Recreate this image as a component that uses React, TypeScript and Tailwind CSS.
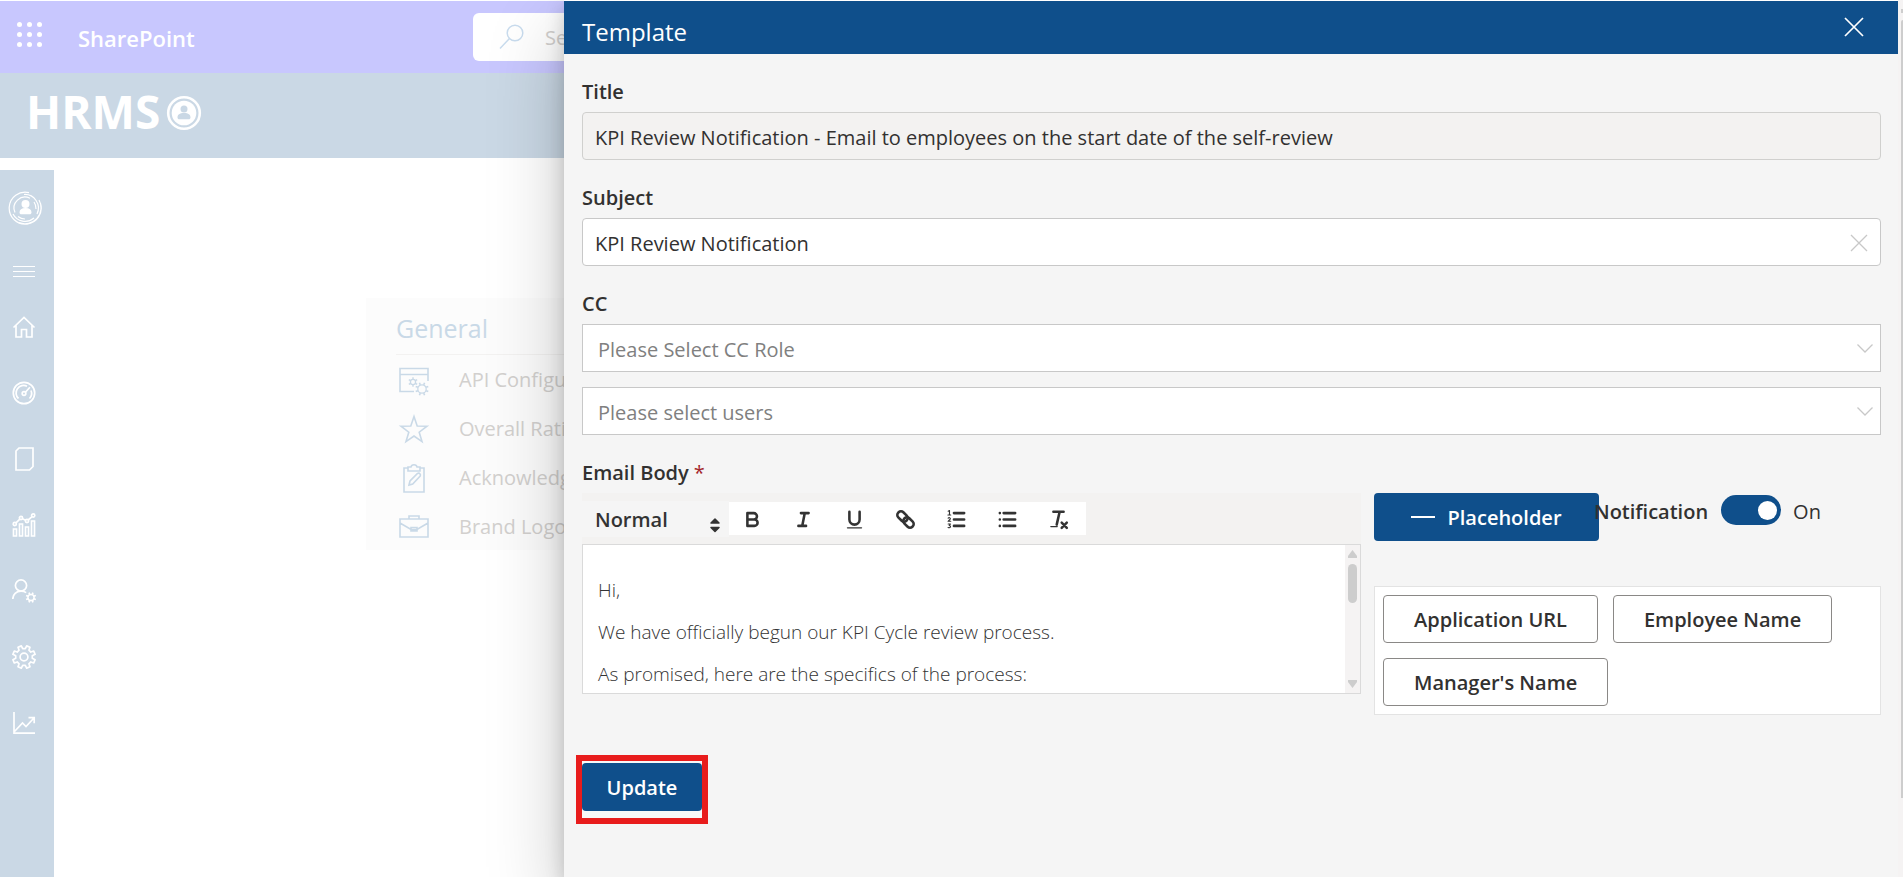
import React, { useState } from "react";

type IconProps = { className?: string };

const stroke = {
  fill: "none",
  stroke: "currentColor",
  strokeWidth: 1.7,
  viewBox: "0 0 24 24",
} as const;

function gearPath(cx: number, cy: number, outer: number, inner: number, teeth: number) {
  const pts: string[] = [];
  const step = (Math.PI * 2) / teeth;
  for (let i = 0; i < teeth; i++) {
    const a = (i + 0.5) * step - Math.PI / 2;
    const spread: [number, number][] = [
      [-0.3, inner],
      [-0.2, outer],
      [0.2, outer],
      [0.3, inner],
    ];
    spread.forEach(([o, r]) => {
      const t = a + o * step;
      pts.push(`${(cx + r * Math.cos(t)).toFixed(2)} ${(cy + r * Math.sin(t)).toFixed(2)}`);
    });
  }
  return `M${pts.join("L")}Z`;
}

function tickPath(cx: number, cy: number, from: number, to: number, count: number) {
  return Array.from({ length: count }, (_, i) => {
    const a = ((i + 0.5) * Math.PI * 2) / count;
    const c = Math.cos(a);
    const s = Math.sin(a);
    return `M${(cx + from * c).toFixed(2)} ${(cy + from * s).toFixed(2)}L${(cx + to * c).toFixed(2)} ${(cy + to * s).toFixed(2)}`;
  }).join("");
}

const BrandMark = ({ className }: IconProps) => (
  <svg className={className} viewBox="0 0 34 34" fill="none" stroke="currentColor" aria-hidden="true">
    <path d="M21 1.6A16 16 0 1 0 32.5 12.500M31 9A16 16 0 0 1 11 31.600" strokeWidth="1.2" />
    <path d="M16 3.500A13.600 13.600 0 0 1 29 23M26 27A13.600 13.600 0 0 1 5 23" strokeWidth="1.2" />
    <path d="M22 7.200A11 11 0 0 0 7 21.500M10 25.500A11 11 0 0 0 17 28M26 11A11 11 0 0 1 28 18" strokeWidth="1.2" />
    <circle cx="17.500" cy="13" r="4" fill="currentColor" stroke="none" />
    <path d="M11.500 21.500c0-3 2-4.500 6-4.500s6 1.500 6 4.500c0 1-.8 1.800-1.800 1.800h-8.400c-1 0-1.800-.8-1.800-1.800Z" fill="currentColor" stroke="none" />
  </svg>
);

const HomeIcon = ({ className }: IconProps) => (
  <svg className={className} {...stroke} aria-hidden="true">
    <path d="M1.500 12.500 12 2.500l10.500 10M4 10.500V22h5.500v-7.500h5V22H20V10.500" />
  </svg>
);
const GaugeIcon = ({ className }: IconProps) => (
  <svg className={className} {...stroke} aria-hidden="true">
    <circle cx="12" cy="12" r="10.700" />
    <circle cx="12" cy="12.500" r="1.800" />
    <path d="m13.400 11.200 4.500-5M6.500 17.500A7.500 7.500 0 0 1 15 5.300M19 9.500a7.500 7.500 0 0 1-1.500 8" />
  </svg>
);
const NoteIcon = ({ className }: IconProps) => (
  <svg className={className} {...stroke} aria-hidden="true">
    <path d="M7 1h14v18.500L17.500 23H4V4Z" />
  </svg>
);
const ChartIcon = ({ className }: IconProps) => (
  <svg className={className} {...stroke} aria-hidden="true">
    <path d="M1.500 16h3v7h-3zM7.500 11h3v12h-3zM13.500 14h3v9h-3zM19.500 8h3v15h-3z" />
    <circle cx="2.800" cy="11" r="1.600" />
    <circle cx="9" cy="5" r="1.600" />
    <circle cx="15" cy="8" r="1.600" />
    <circle cx="21.200" cy="2.500" r="1.600" />
    <path d="m4 9.900 3.800-3.800M10.500 5.800l3 1.400M16.200 7 20 3.600" />
  </svg>
);
const UserGearIcon = ({ className }: IconProps) => (
  <svg className={className} {...stroke} aria-hidden="true">
    <circle cx="9" cy="6.500" r="5.600" />
    <path d="M.8 20c0-4.600 3.500-7.900 8.200-7.900 2 0 3.800.5 5.200 1.500" />
    <circle cx="19" cy="18.500" r="3.100" strokeWidth="1.500" />
    <path d={tickPath(19, 18.5, 3.2, 5.3, 8)} strokeWidth="1.700" />
  </svg>
);
const GearIcon = ({ className }: IconProps) => (
  <svg className={className} {...stroke} strokeLinejoin="round" aria-hidden="true">
    <path d={gearPath(12, 12, 11.4, 8.4, 8)} />
    <circle cx="12" cy="12" r="3.900" />
  </svg>
);
const TrendIcon = ({ className }: IconProps) => (
  <svg className={className} {...stroke} aria-hidden="true">
    <path d="M2 1v21.200H23M2.500 20.500l8-8.500 3.500 3.500L21.500 7.500M16.500 6.700h5.700v5.500" />
  </svg>
);

const ApiIcon = ({ className }: IconProps) => (
  <svg className={className} viewBox="0 0 32 32" fill="none" stroke="currentColor" strokeWidth="1.600" aria-hidden="true">
    <path d="M30 17V4.500H2v23h14M2 10.500h28" />
    <circle cx="15" cy="18" r="2.600" strokeWidth="1.300" />
    <path d={tickPath(15, 18, 2.8, 4.8, 6)} strokeWidth="1.400" />
    <circle cx="24" cy="25" r="4.200" strokeWidth="1.300" />
    <path d={tickPath(24, 25, 4.4, 6.8, 8)} strokeWidth="1.600" />
  </svg>
);
const StarIcon = ({ className }: IconProps) => (
  <svg className={className} viewBox="0 0 32 32" fill="none" stroke="currentColor" strokeWidth="1.600" aria-hidden="true">
    <path d="m16 3.500 3.200 9.500 9.800.2-7.800 6 2.800 9.400-8-5.600-8 5.600 2.800-9.400-7.800-6 9.800-.2Z" />
  </svg>
);
const ClipboardIcon = ({ className }: IconProps) => (
  <svg className={className} viewBox="0 0 32 32" fill="none" stroke="currentColor" strokeWidth="1.600" aria-hidden="true">
    <path d="M10 6H6v24h20V6h-4M10 5h3c.4-3 5.600-3 6 0h3v4H10ZM11 23l1-4 7.500-7.500c2-1 3.500.8 2.700 2.600L14.700 22Z" />
  </svg>
);
const CaseIcon = ({ className }: IconProps) => (
  <svg className={className} viewBox="0 0 32 32" fill="none" stroke="currentColor" strokeWidth="1.600" aria-hidden="true">
    <path d="M2 8h28v18H2ZM11 8V5h10v3M2 12l11 6.500h6L30 12M13 16.500h6v3.500h-6Z" />
  </svg>
);

const sideItems = [
  { label: "Home", Icon: HomeIcon },
  { label: "Dashboard", Icon: GaugeIcon },
  { label: "Notes", Icon: NoteIcon },
  { label: "Reports", Icon: ChartIcon },
  { label: "User settings", Icon: UserGearIcon },
  { label: "Settings", Icon: GearIcon },
  { label: "Trends", Icon: TrendIcon },
];

const generalItems = [
  { label: "API Configuration", Icon: ApiIcon },
  { label: "Overall Rating", Icon: StarIcon },
  { label: "Acknowledge", Icon: ClipboardIcon },
  { label: "Brand Logo", Icon: CaseIcon },
];

function BackgroundPage() {
  return (
    <div className="flex h-full flex-col pt-px">
      <header className="flex h-[72px] shrink-0 items-center bg-[#c8c7fe] text-white">
        <button aria-label="App launcher" className="mb-1.5 ml-[17px] grid grid-cols-3 gap-[5px]">
          {Array.from({ length: 9 }, (_, i) => (
            <span key={i} className="size-[5px] rounded-full bg-white" />
          ))}
        </button>
        <span className="ml-9 w-[395px] pt-0.5 text-[22px] font-semibold">SharePoint</span>
        <div className="flex h-12 flex-1 items-center rounded-md bg-white">
          <svg className="ml-6 size-7 text-[#c9dcee]" viewBox="0 0 28 28" fill="none" stroke="currentColor" strokeWidth="1.500" aria-hidden="true">
            <circle cx="18" cy="10" r="7.800" />
            <path d="M12.500 15.500 3 25.500" />
          </svg>
          <input
            aria-label="Search"
            placeholder="Search"
            className="ml-5 w-40 bg-transparent pt-0.5 text-xl outline-none placeholder:text-[#d2d0ce]"
          />
        </div>
      </header>
      <div className="flex h-[85px] shrink-0 items-center bg-[#cad8e5] pb-1.5 pl-[26px] text-white">
        <span className="pb-1 text-[46px] leading-none font-bold">HRMS</span>
        <svg className="ml-1.5 size-9" viewBox="0 0 36 36" fill="none" stroke="currentColor" aria-hidden="true">
          <circle cx="18" cy="18" r="15.800" strokeWidth="2.600" />
          <circle cx="18" cy="18" r="12.300" fill="currentColor" stroke="none" />
          <g fill="#cad8e5" stroke="none">
            <circle cx="18" cy="14" r="3.500" />
            <path d="M11.500 22.500c0-3 2-4.500 6.500-4.500s6.500 1.500 6.500 4.500c0 1-.8 1.800-1.800 1.800h-9.400c-1 0-1.800-.8-1.800-1.800Z" />
          </g>
        </svg>
      </div>
      <div className="flex flex-1 pt-3">
        <nav aria-label="Main" className="flex w-[54px] shrink-0 flex-col bg-[#cad8e5] text-white">
          <a href="#profile" aria-label="Profile" className="flex h-[76px] items-center pl-2">
            <BrandMark className="size-[34px]" />
          </a>
          <button aria-label="Menu" className="flex h-12 flex-col justify-center gap-1 pt-0.5 pl-[13px]">
            <span className="h-px w-[22px] bg-white" />
            <span className="h-px w-[22px] bg-white" />
            <span className="h-px w-[22px] bg-white" />
          </button>
          {sideItems.map(({ label, Icon }) => (
            <a key={label} href="#nav" aria-label={label} className="flex h-[66px] items-center pl-3">
              <Icon className="size-6" />
            </a>
          ))}
        </nav>
        <main className="flex-1 pt-32 pl-[312px]">
          <section className="h-[252px] w-[420px] bg-[#fcfcfc] px-[30px] pt-1.5">
            <h2 className="h-[51px] border-b border-[#f3f2f1] text-[25px] leading-[48px] text-[#c9d9e7]">General</h2>
            <ul>
              {generalItems.map(({ label, Icon }) => (
                <li key={label} className="flex h-[49px] items-center text-xl text-[#d2d0ce]">
                  <Icon className="mr-[29px] ml-0.5 size-8 shrink-0 text-[#c9d9e7]" />
                  {label}
                </li>
              ))}
            </ul>
          </section>
        </main>
      </div>
    </div>
  );
}

const labelClass = "flex gap-[5px] text-xl leading-7 font-semibold text-[#323130]";

function Select({ label, text }: { label: string; text: string }) {
  return (
    <div className="relative">
      <select
        aria-label={label}
        className="h-12 w-full appearance-none border border-[#c8c8c8] bg-white pt-1 pl-[15px] text-xl text-[#808080] outline-none"
      >
        <option>{text}</option>
      </select>
      <svg className="pointer-events-none absolute top-4 right-2 size-4 text-[#c8c8c8]" viewBox="0 0 16 16" fill="none" stroke="currentColor" strokeWidth="1.300" aria-hidden="true">
        <path d="m.5 4.500 7.500 7.500 7.500-7.500" />
      </svg>
    </div>
  );
}

const tools = [
  { label: "Bold", d: "M5 4h5a2.500 2.500 0 0 1 0 5H5ZM5 9h5.500a2.500 2.500 0 0 1 0 5H5Z" },
  { label: "Italic", d: "M7 4h6M5 14h6M8 14l2-10" },
  { label: "Underline", d: "M5 3v6a4 4 0 0 0 8 0V3" },
  { label: "Link", d: "" },
  { label: "Numbered list", d: "M7 4h8M7 9h8M7 14h8" },
  { label: "Bulleted list", d: "M6 4h9M6 9h9M6 14h9M3 4h.01M3 9h.01M3 14h.01" },
  { label: "Clear formatting", d: "M5 3h8M7.600 13 9.900 3" },
];

function Toolbar() {
  return (
    <div className="flex h-[51px] items-center bg-[#f3f2f1]">
      <div className="relative h-9 w-[147px] bg-[#f5f5f5]">
        <select
          aria-label="Text style"
          className="h-9 w-full appearance-none bg-transparent pt-0.5 pl-[13px] text-xl font-semibold text-[#333] outline-none"
        >
          <option>Normal</option>
        </select>
        <svg className="pointer-events-none absolute top-4 right-2 h-4 w-3" viewBox="0 0 12 16" fill="#333" stroke="#333" strokeWidth="1.500" strokeLinejoin="round" aria-hidden="true">
          <path d="M2 6h8L6 2ZM2 10.500h8L6 14.500Z" />
        </svg>
      </div>
      <div className="flex h-[33px] bg-white">
        {tools.map(({ label, d }) => (
          <button key={label} aria-label={label} className="flex w-[51px] items-center pt-0.5 pl-3">
            <svg className="size-[23px]" viewBox="0 0 18 18" fill="none" stroke="#333" strokeWidth="2" strokeLinecap="round" strokeLinejoin="round" aria-hidden="true">
              {d && <path d={d} />}
              {label === "Link" && (
                <g transform="rotate(45 9 9)">
                  <rect x="1.200" y="6.200" width="9" height="5.600" rx="2.600" />
                  <rect x="7.800" y="6.200" width="9" height="5.600" rx="2.600" />
                </g>
              )}
              {label === "Underline" && <path d="M3.500 15.500h11" strokeWidth="1" />}
              {label === "Numbered list" && (
                <path
                  d="M2.500 2.500l1-.5v3.500M2.300 5.500h2.200M2.500 8c.8-1 2.200 0 1.500.8L2.400 10.400h2.100M2.500 12.500h1.800l-1 1.200c1.500 0 1.300 2.200-.9 1.600"
                  strokeWidth=".9"
                />
              )}
              {label === "Clear formatting" && (
                <>
                  <path d="M3 14.500h5" strokeWidth="1" />
                  <path d="m11.500 11.500 4 4M15.500 11.500l-4 4" strokeWidth="2" />
                </>
              )}
            </svg>
          </button>
        ))}
      </div>
    </div>
  );
}

const chipClass =
  "h-12 rounded-sm border border-[#8a8886] bg-white px-[30px] pt-0.5 text-xl font-semibold text-[#323130]";

export default function App() {
  const [subject, setSubject] = useState("KPI Review Notification");
  const [notify, setNotify] = useState(true);

  return (
    <div className="relative h-screen overflow-hidden bg-white font-['Open_Sans',sans-serif]">
      <BackgroundPage />

      <div className="absolute inset-y-0 right-0 left-[564px] flex bg-[#f5f5f5] shadow-[0_32px_72px_rgba(0,0,0,0.22),0_6px_18px_rgba(0,0,0,0.18)]">
        <section aria-label="Template" className="flex-1">
          <header className="flex h-[54px] items-center justify-between border-t border-white bg-[#0f4f8b] pr-[34px] pb-0.5 pl-[18px] text-white">
            <h1 className="pt-2.5 text-2xl">Template</h1>
            <button aria-label="Close">
              <svg className="size-5" viewBox="0 0 20 20" stroke="currentColor" strokeWidth="1.700" aria-hidden="true">
                <path d="m1 1 18 18M19 1 1 19" />
              </svg>
            </button>
          </header>

          <form className="pt-6 pr-[17px] pl-[18px]" onSubmit={(e) => e.preventDefault()}>
            <label htmlFor="title" className={labelClass}>Title</label>
            <input
              id="title"
              readOnly
              value="KPI Review Notification - Email to employees on the start date of the self-review"
              className="mt-1.5 h-12 w-full rounded-sm border border-[#d0d0ce] bg-[#f3f2f1] px-3 pt-0.5 text-xl text-[#323130] outline-none"
            />

            <label htmlFor="subject" className={`${labelClass} mt-6`}>Subject</label>
            <div className="mt-1.5 flex h-12 items-center rounded-sm border border-[#c8c8c8] bg-white pr-3">
              <input
                id="subject"
                value={subject}
                onChange={(e) => setSubject(e.target.value)}
                className="h-full flex-1 bg-transparent px-3 pt-0.5 text-xl text-[#323130] outline-none"
              />
              <button type="button" aria-label="Clear subject" className="pt-0.5" onClick={() => setSubject("")}>
                <svg className="size-[18px] text-[#c8c8c8]" viewBox="0 0 18 18" stroke="currentColor" strokeWidth="1.300" aria-hidden="true">
                  <path d="m1 1 16 16M17 1 1 17" />
                </svg>
              </button>
            </div>

            <span className={`${labelClass} mt-6`}>CC</span>
            <div className="mt-1.5 flex flex-col gap-[15px]">
              <Select label="CC role" text="Please Select CC Role" />
              <Select label="CC users" text="Please select users" />
            </div>

            <div id="body-label" className={`${labelClass} mt-6`}>
              <span>Email Body</span>
              <span className="font-normal text-[#a4262c]">*</span>
            </div>

            <div className="mt-1.5 flex gap-[13px]">
              <div className="min-w-0 flex-[779]">
                <Toolbar />
                <div className="flex h-[150px] border border-[#dadada] bg-white">
                  <div
                    role="textbox"
                    aria-labelledby="body-label"
                    aria-multiline="true"
                    contentEditable
                    suppressContentEditableWarning
                    className="flex-1 overflow-hidden pt-6 pl-[15px] text-[19px] leading-[42px] font-light text-[#333] outline-none"
                  >
                    <p>Hi,</p>
                    <p>We have officially begun our KPI Cycle review process.</p>
                    <p>As promised, here are the specifics of the process:</p>
                  </div>
                  <div className="flex w-[15px] flex-col items-center justify-between bg-[#f5f3f3] py-[5px]">
                    <div className="flex flex-col items-center gap-[6px]">
                      <svg className="h-2 w-[9px]" viewBox="0 0 9 8" fill="#cdcdcd" aria-hidden="true"><path d="M4.500 0 9 6v2H0V6Z" /></svg>
                      <span className="h-[39px] w-[9px] rounded-full bg-[#cdcdcd]" />
                    </div>
                    <svg className="h-2 w-[9px]" viewBox="0 0 9 8" fill="#cdcdcd" aria-hidden="true"><path d="M4.500 8 9 2V0H0v2Z" /></svg>
                  </div>
                </div>
              </div>

              <div className="min-w-0 flex-[507]">
                <div className="flex items-start">
                  <button type="button" className="flex h-12 w-[225px] items-center justify-center gap-3 rounded-sm bg-[#0f4f8b] text-xl font-semibold text-white">
                    <span className="h-0.5 w-6 bg-white" />
                    <span className="pt-0.5">Placeholder</span>
                  </button>
                  <label htmlFor="notify" className="-ml-[5px] pt-1 text-xl leading-[30px] font-semibold text-[#323130]">Notification</label>
                  <button
                    id="notify"
                    type="button"
                    role="switch"
                    aria-checked={notify}
                    onClick={() => setNotify(!notify)}
                    className="mt-0.5 ml-[13px] flex h-[30px] w-[60px] items-center justify-end rounded-full bg-[#0f4f8b] pr-1"
                  >
                    <span className="size-[19px] rounded-full bg-white" />
                  </button>
                  <span className="ml-3 pt-1 text-xl leading-[30px] text-[#323130]">{notify ? "On" : "Off"}</span>
                </div>
                <div className="mt-[45px] flex flex-wrap gap-[15px] border border-[#e3e3e3] bg-white p-2">
                  <button type="button" className={chipClass}>Application URL</button>
                  <button type="button" className={chipClass}>Employee Name</button>
                  <button type="button" className={chipClass}>Manager's Name</button>
                </div>
              </div>
            </div>

            <div className="mt-10 -ml-1.5 inline-flex border-6 border-[#e81c1c] bg-[#f8f8f8] pt-0.5 pb-[7px]">
              <button type="submit" className="h-12 w-[120px] rounded-sm bg-[#0f4f8b] pt-0.5 text-xl font-semibold text-white">
                Update
              </button>
            </div>
          </form>
        </section>

        <div className="flex w-[5px] flex-col items-end bg-[#f5f3f3] pt-[9px]">
          <span className="h-1 w-0.5 bg-[#cdcdcd]" />
          <span className="mt-[7px] h-[778px] w-0.5 rounded-tl-sm bg-[#cdcdcd]" />
        </div>
      </div>
    </div>
  );
}
